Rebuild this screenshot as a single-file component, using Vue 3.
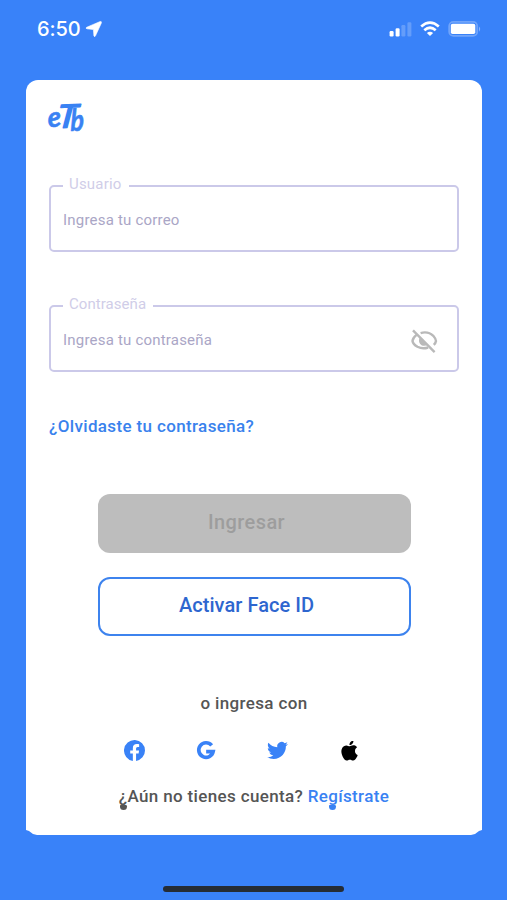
<script setup>
const fields = [
  { label: 'Usuario', hint: 'Ingresa tu correo', kind: 'user' },
  { label: 'Contraseña', hint: 'Ingresa tu contraseña', kind: 'pass', secret: true },
]
</script>

<template>
  <div class="screen">
    <header class="status">
      <span class="time">6:50</span>
      <svg class="locate" width="18" height="18" viewBox="0 0 18 18"><path d="M15.2 1.5 1.8 7.2q-1.8 1 .2 1.6l6.4.8.5 6.3q.7 1.6 1.6-.1L16.4 2.9q.3-1.7-1.2-1.4Z" fill="#fff" stroke="#fff" stroke-width=".6" /></svg>
      <div class="signals">
        <svg width="24" height="16" viewBox="0 0 24 16" fill="#fff">
          <rect x="1.6" y="10" width="4" height="5.5" rx="1.2" />
          <rect x="7.6" y="7.2" width="4" height="8.3" rx="1.2" />
          <rect x="13.4" y="4" width="4" height="11.5" rx="1.2" opacity=".22" />
          <rect x="19.4" y="1.2" width="4" height="14.3" rx="1.2" opacity=".22" />
        </svg>
        <svg width="20" height="16" viewBox="0 0 20 16" fill="none" stroke="#fff" stroke-width="2.7">
          <path d="M1.2 5.4Q10-2.3 18.8 5.4" />
          <path d="M4.3 9.2q5.7-4.9 11.4 0" />
          <path d="m6.9 12 3.1 3.1 3.1-3.1q-3.1-2.4-6.2 0Z" fill="#fff" stroke="none" />
        </svg>
        <svg width="33" height="16" viewBox="0 0 33 16">
          <rect x="1.2" y=".9" width="28" height="14" rx="4.2" fill="none" stroke="#fff" stroke-opacity=".28" stroke-width="1.8" />
          <rect x="2.8" y="2.8" width="24.5" height="10.3" rx="1.8" fill="#fff" />
          <path d="M31 5.5q2.4 2.6 0 5.2Z" fill="#fff" opacity=".4" />
        </svg>
      </div>
    </header>

    <main class="card">
      <svg class="logo" width="40" height="34" viewBox="0 0 40 34">
        <text class="mark" transform="translate(.2 27.2) rotate(-4) scale(1.1 1.12)" font-size="25">e</text>
        <text class="mark cap" transform="translate(8.2 28) rotate(-2) skewX(-9) scale(1.16 1)" font-size="32">T</text>
        <text class="mark" transform="translate(22.6 30.8) scale(1 1.2)" font-size="25">b</text>
      </svg>

      <fieldset v-for="f in fields" :key="f.kind" class="field" :class="f.kind">
        <legend>{{ f.label }}</legend>
        <div class="control">
          <span class="hint">{{ f.hint }}</span>
          <svg v-if="f.secret" class="eye" width="28" height="26" viewBox="0 0 28 26" fill="none" stroke="#b9b9b9" stroke-width="2.4">
            <path d="M10.6 5.1Q18 2.7 23.6 8.2q2.5 2.8 2.4 4.8-.3 2-2.2 3.8M6.5 6.9Q2.6 10.1 2.5 13q.4 3.2 5 5.8 5 2.6 10.6.7" />
            <path d="m3 2.3 21.6 21.8" />
            <path d="M9.5 10q-1.9 5 2.4 7.4 3.5 1.2 5.8-.8Z" fill="#b9b9b9" stroke="none" />
          </svg>
        </div>
      </fieldset>

      <a class="forgot">¿Olvidaste tu contraseña?</a>

      <div class="actions">
        <button class="btn login" disabled><span>Ingresar</span></button>
        <button class="btn face"><span>Activar Face ID</span></button>
      </div>

      <p class="or">o ingresa con</p>

      <nav class="social">
        <svg width="24" height="24" viewBox="0 0 24 24" fill="#3982f7"><path d="M24 12A12 12 0 1 0 10.1 23.9v-8.4h-3V12h3V9.4c0-3 1.8-4.7 4.5-4.7 1.3 0 2.7.2 2.7.2v3h-1.5c-1.5 0-2 .9-2 1.9V12h3.4l-.5 3.5h-2.9v8.4A12 12 0 0 0 24 12Z" /></svg>
        <svg width="24" height="24" viewBox="0 0 24 24" fill="none" stroke="#3982f7" stroke-width="4.2"><path d="M17.9 6.2A8.3 8.3 0 1 0 19.6 13.2H11.6" /></svg>
        <svg width="24" height="24" viewBox="0 0 24 24" fill="#3982f7"><path d="M23.95 4.57a10 10 0 0 1-2.82.77 4.96 4.96 0 0 0 2.16-2.72c-.95.55-2 .95-3.13 1.18a4.92 4.92 0 0 0-8.38 4.48C7.69 8.09 4.07 6.13 1.64 3.16a4.82 4.82 0 0 0-.67 2.48c0 1.71.87 3.21 2.19 4.1a4.9 4.9 0 0 1-2.23-.62v.06a4.92 4.92 0 0 0 3.95 4.83 5 5 0 0 1-2.21.08 4.94 4.94 0 0 0 4.6 3.42A9.87 9.87 0 0 1 0 19.54a13.99 13.99 0 0 0 7.55 2.21c9.05 0 14-7.5 14-13.98 0-.21 0-.42-.02-.63a9.94 9.94 0 0 0 2.42-2.57Z" /></svg>
        <svg class="apple" width="24" height="24" viewBox="0 0 24 24" fill="#000"><path d="M12.15 6.9c-.95 0-2.42-1.08-3.96-1.04-2.04.03-3.91 1.18-4.96 3.01-2.12 3.68-.55 9.1 1.52 12.09 1.01 1.45 2.21 3.09 3.79 3.04 1.52-.07 2.09-.99 3.94-.99 1.83 0 2.35.99 3.96.95 1.64-.03 2.68-1.48 3.68-2.95 1.16-1.69 1.64-3.33 1.66-3.42-.04-.01-3.18-1.22-3.22-4.86-.03-3.04 2.48-4.49 2.6-4.56-1.43-2.09-3.62-2.32-4.39-2.38-2-.16-3.68 1.09-4.62 1.09ZM15.53 3.83c.84-1.01 1.4-2.43 1.24-3.83-1.2.05-2.66.8-3.53 1.82-.78.9-1.45 2.34-1.27 3.71 1.34.1 2.72-.69 3.56-1.7Z" /></svg>
      </nav>

      <p class="signup"><span class="tail">¿</span>Aún no tienes cuenta? <a>Re<span class="tail">g</span>ístrate</a></p>
    </main>

    <div class="home"></div>
  </div>
</template>

<style>
body { margin: 0; background: #3982f9; }
</style>

<style scoped>
.screen {
  box-sizing: border-box;
  width: 507px;
  height: 900px;
  overflow: hidden;
  display: flex;
  flex-direction: column;
  background: #3982f9;
  font-family: Roboto, "Liberation Sans", sans-serif;
}
.status {
  box-sizing: border-box;
  height: 80px;
  padding: 17px 26px 0 37px;
  display: flex;
  align-items: flex-start;
  color: #fff;
}
.time { font: 500 20px/24px Inter, sans-serif; letter-spacing: -.1px; width: 48px; }
.locate { margin-top: 3px; }
.signals { margin: 4px 0 0 auto; display: flex; gap: 8px; }
.card {
  box-sizing: border-box;
  width: 456px;
  height: 755px;
  margin-left: 26px;
  padding: 20px 23px 0;
  background: #fff;
  border-radius: 12px 12px 0 0;
  clip-path: polygon(0 0, 100% 0, 100% 750px, 453px 751px, 449px 754px, 445px 100%, 11px 100%, 7px 754px, 3px 751px, 0 750px);
  display: flex;
  flex-direction: column;
}
.logo { display: block; margin-left: -1px; overflow: visible; flex: none; }
.mark { font-family: Lato, sans-serif; font-weight: 700; font-style: italic; fill: #3982f3; stroke: #3982f3; stroke-width: .5px; stroke-linejoin: round; }
.mark.cap { font-weight: 400; stroke-width: 1.4px; }
.field {
  box-sizing: border-box;
  width: 410px;
  height: 77px;
  min-width: 0;
  margin: 41px 0 0;
  padding: 0 12px;
  border: 2px solid #cbc9e9;
  border-radius: 5px;
  flex: none;
}
.field.pass { margin-top: 43px; }
.field legend {
  height: 22px;
  padding: 0 7px 0 6px;
  font-size: 15px;
  line-height: 18px;
  letter-spacing: .2px;
  color: #d0cde8;
}
.field.pass legend { letter-spacing: .05px; }
.control { height: 45px; display: flex; align-items: center; justify-content: space-between; }
.hint { font-size: 15px; letter-spacing: .2px; color: #aaa6c6; }
.eye { margin-right: 7px; margin-top: 3px; }
.forgot {
  margin-top: 43px;
  font-size: 17px;
  line-height: 22px;
  font-weight: 500;
  letter-spacing: .36px;
  color: #3982ed;
}
.actions { display: flex; flex-direction: column; align-items: center; gap: 24px; margin-top: 57px; }
.btn {
  box-sizing: border-box;
  width: 313px;
  height: 59px;
  padding: 0 15px 3px 0;
  border-radius: 12px;
  font: 500 20px/24px Roboto, sans-serif;
}
.login { background: #bdbdbd; border: 0; color: #9d9d9d; letter-spacing: .4px; }
.face { background: #fff; border: 2.5px solid #3d83ee; color: #2e66cf; letter-spacing: .05px; }
.or { margin: 56px 0 0; text-align: center; font-size: 17px; line-height: 22px; font-weight: 500; color: #555; letter-spacing: .35px; }
.social { display: flex; gap: 50.6px; margin: 26px 0 0 75px; }
.social svg { width: 21px; height: 21px; flex: none; }
.social .apple { padding: .5px; box-sizing: border-box; }
.signup { margin: 24px 0 0; text-align: center; font-size: 17px; line-height: 22px; font-weight: 500; letter-spacing: .35px; color: #555; white-space: nowrap; }
.signup a { color: #3982f3; }
.tail { position: relative; }
.tail::after {
  content: "";
  position: absolute;
  left: 1px;
  bottom: -4px;
  width: 7px;
  height: 5px;
  border-radius: 1px 2px 5px 5px;
  background: currentColor;
}
.home { width: 181px; height: 6px; margin: 51px 0 0 163px; border-radius: 3px; background: #252c35; }
</style>
